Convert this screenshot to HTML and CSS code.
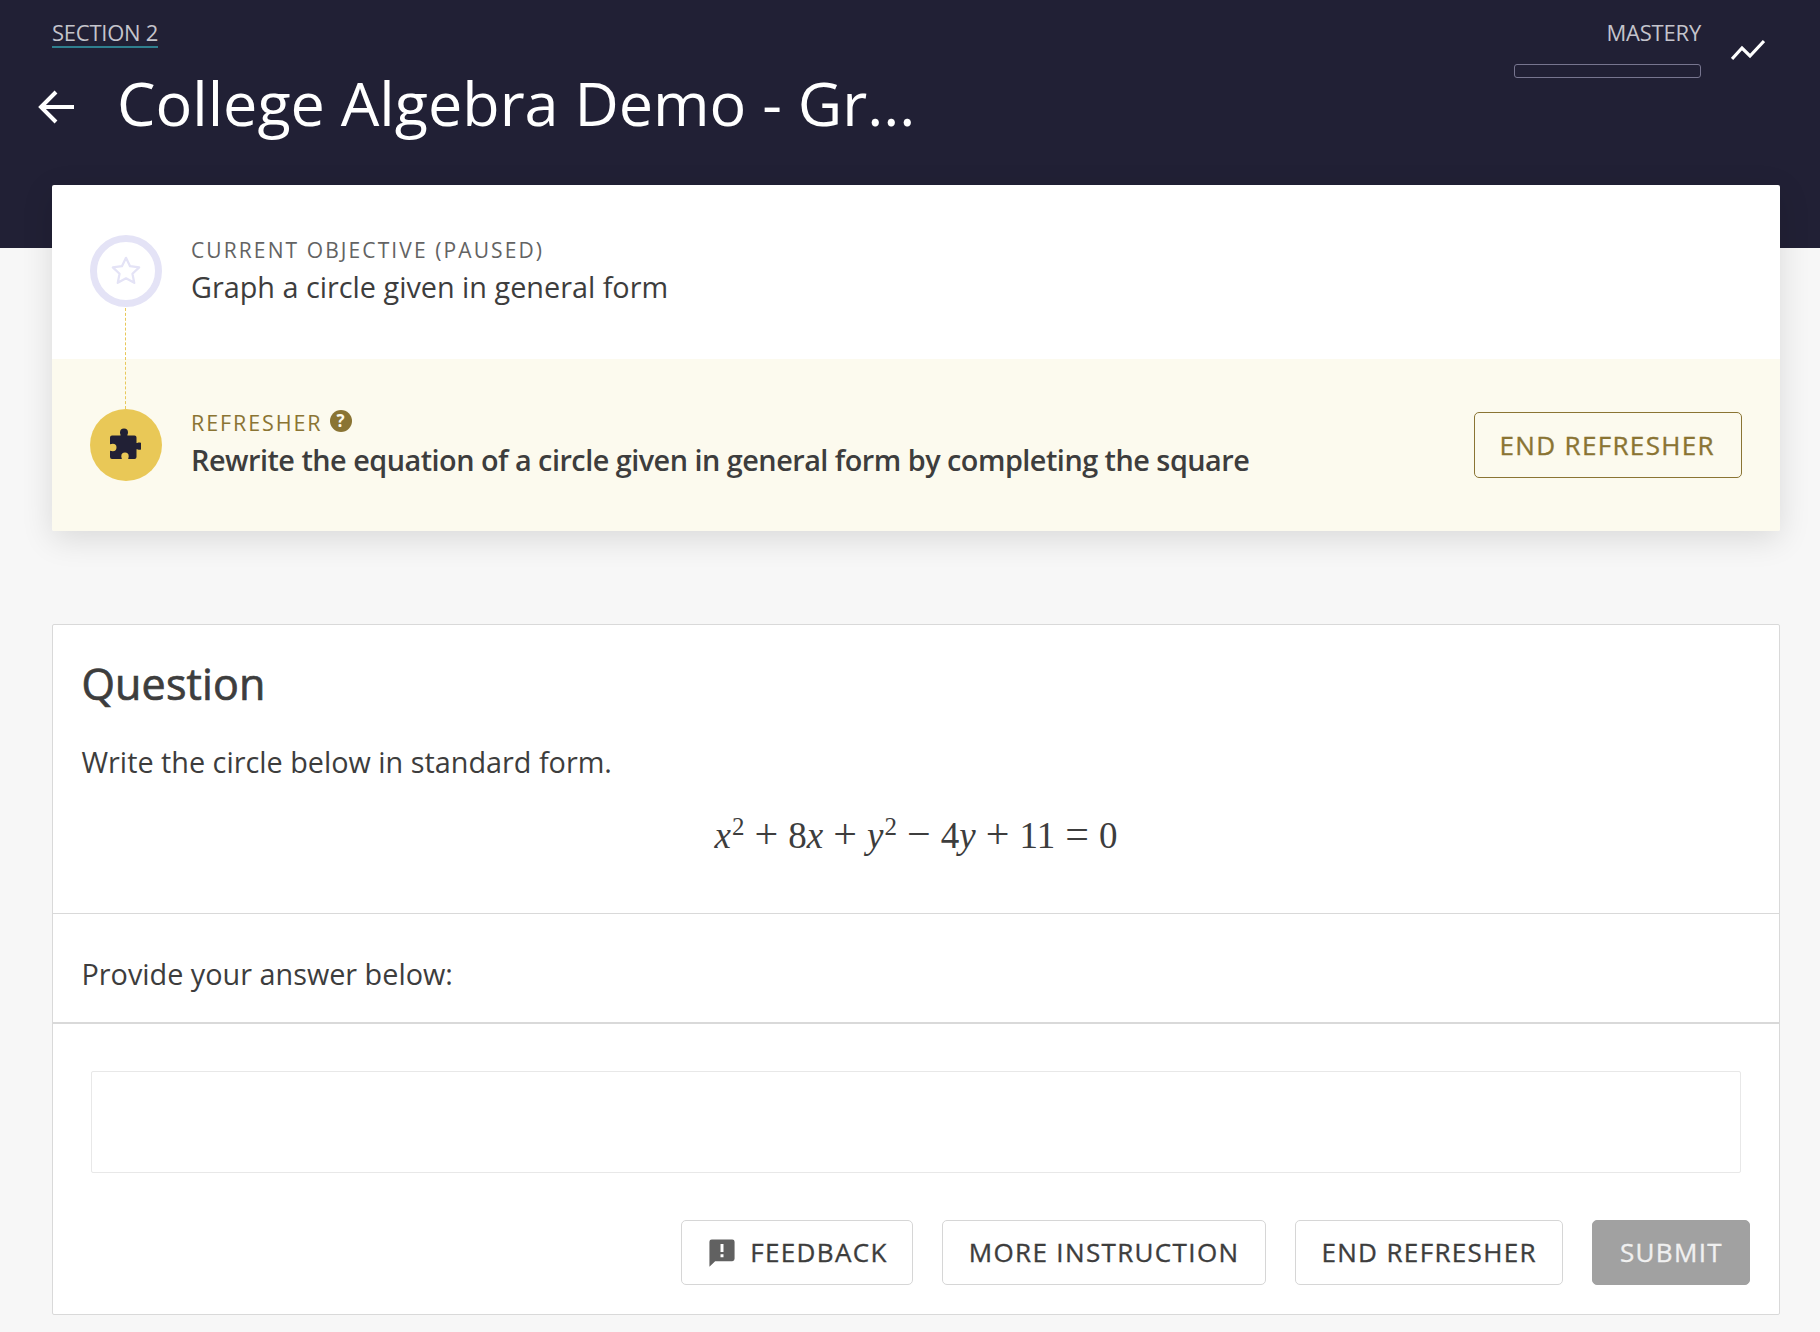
FILE: index.html
```html
<!DOCTYPE html>
<html lang="en">
<head>
<meta charset="utf-8">
<title>College Algebra Demo</title>
<link rel="stylesheet" href="styles.css">
</head>
<body>
<header class="hero">
  <div class="hero-top">
    <div class="hero-left">
      <a class="section-link">SECTION 2</a>
      <div class="title-row">
        <svg class="back" viewBox="0 0 38 34" width="38" height="34"><path d="M36 17H3M18 2L3 17l15 15" fill="none" stroke="#fff" stroke-width="4"/></svg>
        <h1 class="title">College Algebra Demo - Gr...</h1>
      </div>
    </div>
    <div class="mastery">
      <div class="mastery-col">
        <span class="mastery-label">MASTERY</span>
        <div class="mastery-bar"></div>
      </div>
      <svg class="trend" viewBox="0 0 34 22" width="34" height="22"><path d="M1 20L11 9l8 8L33 2" fill="none" stroke="#fff" stroke-width="3.200"/></svg>
    </div>
  </div>
</header>
<main class="content">
  <section class="objectives">
    <div class="connector"></div>
    <div class="obj-row">
      <div class="ring">
        <svg viewBox="0 0 24 24" width="36" height="36"><path d="M12 3.200l2.700 5.600 6.100.8-4.500 4.200 1.200 6.100-5.500-3-5.500 3 1.200-6.100-4.500-4.200 6.100-.8z" fill="none" stroke="#e4e3f6" stroke-width="1.500" stroke-linejoin="round"/></svg>
      </div>
      <div class="obj-text">
        <div class="eyebrow">CURRENT OBJECTIVE (PAUSED)</div>
        <div class="obj-name">Graph a circle given in general form</div>
      </div>
    </div>
    <div class="obj-row refresher">
      <div class="disc">
        <svg class="puzzle" viewBox="0 0 34 34" width="34" height="34"><path fill="#212035" d="M13 4.500a4 4 0 0 1 8 0c0 1.300-.6 2-.6 3h7.100a2 2 0 0 1 2 2v5.500c1 0 1.700-.6 2.800-.6a3.700 3.700 0 0 1 0 7.400c-1.100 0-1.800-.6-2.800-.6v7.800a2 2 0 0 1-2 2h-6.300c0-1 .5-1.700.5-2.800a3.700 3.700 0 0 0-7.400 0c0 1.100.5 1.800.5 2.800H5a2 2 0 0 1-2-2v-6.300c1 0 1.700.5 2.800.5a3.700 3.700 0 0 0 0-7.400c-1.100 0-1.800.5-2.800.5V9.500a2 2 0 0 1 2-2h8.600c0-1-.6-1.700-.6-3z"/></svg>
      </div>
      <div class="obj-text grow">
        <div class="eyebrow gold">REFRESHER <span class="help">?</span></div>
        <div class="obj-name strong">Rewrite the equation of a circle given in general form by completing the square</div>
      </div>
      <button class="btn btn-gold">END REFRESHER</button>
    </div>
  </section>

  <section class="question">
    <div class="q-body">
      <h2 class="q-title">Question</h2>
      <p class="q-text">Write the circle below in standard form.</p>
      <div class="math"><i>x</i><sup>2</sup> <span class="op">+</span> 8<i>x</i> <span class="op">+</span> <i>y</i><sup>2</sup> <span class="op">−</span> 4<i>y</i> <span class="op">+</span> 11 <span class="op">=</span> 0</div>
    </div>
    <div class="q-prompt">Provide your answer below:</div>
    <div class="q-answer">
      <div class="answer-box"></div>
      <div class="actions">
        <button class="btn btn-feedback">
          <svg class="fb-icon" viewBox="0 0 28 28" width="32" height="32"><path fill="#616161" d="M3 5a2 2 0 0 1 2-2h18a2 2 0 0 1 2 2v15a2 2 0 0 1-2 2H8l-5 5z"/><path fill="#fff" d="M12.700 7h2.600v7h-2.600zM12.700 16h2.600v2.600h-2.600z"/></svg>
          FEEDBACK
        </button>
        <button class="btn btn-more">MORE INSTRUCTION</button>
        <button class="btn">END REFRESHER</button>
        <button class="btn btn-disabled">SUBMIT</button>
      </div>
    </div>
  </section>
</main>
</body>
</html>
```
FILE: styles.css
```css
* { box-sizing: border-box; }
html, body { margin: 0; height: 100%; }
body {
  width: 1820px;
  height: 1332px;
  overflow: hidden;
  background: #f7f7f7;
  font-family: "Open Sans", sans-serif;
  color: #3d3d3d;
}
.hero {
  height: 248px;
  background: #212035;
  padding: 0 55px 0 38px;
}
.hero-top { display: flex; justify-content: space-between; align-items: flex-start; }
.hero-left { padding-top: 18px; }
.section-link {
  display: inline-block;
  margin-left: 14px;
  font-size: 22px;
  line-height: 28px;
  letter-spacing: -0.25px;
  color: #c4c4cc;
  border-bottom: 2px solid #2f7f8f;
}
.title-row { display: flex; align-items: center; gap: 41px; margin-top: 14px; }
.back { flex: none; margin-top: 8px; }
.title {
  margin: 0;
  font-size: 61.1px;
  line-height: 82px;
  font-weight: 400;
  color: #fff;
}
.mastery { display: flex; gap: 30px; padding-top: 17px; }
.mastery-col { display: flex; flex-direction: column; align-items: flex-end; gap: 17px; }
.mastery-label { font-size: 22px; line-height: 30px; letter-spacing: -0.2px; color: #c4c4cc; }
.mastery-bar { width: 187px; height: 14px; border: 1px solid #77758f; border-radius: 3px; }
.trend { margin-top: 22px; }
.content { padding: 0 40px 0 52px; margin-top: -63px; position: relative; }
.objectives {
  position: relative;
  background: #fff;
  border-radius: 2px;
  box-shadow: 0 8px 32px rgba(0,0,0,.12);
  overflow: hidden;
}
.connector {
  position: absolute;
  z-index: 1;
  left: 73px;
  top: 123px;
  height: 101px;
  border-left: 1px dashed #e8c85a;
}
.obj-row {
  position: relative;
  height: 174px;
  display: flex;
  align-items: center;
  padding: 0 38px;
  gap: 29px;
}
.obj-row.refresher { height: 172px; background: #fcfaee; }
.ring {
  flex: none;
  width: 72px;
  height: 72px;
  margin-top: -2px;
  border: 7px solid #e4e3f6;
  border-radius: 50%;
  background: #fff;
  display: flex;
  align-items: center;
  justify-content: center;
}
.disc {
  flex: none;
  width: 72px;
  height: 72px;
  border-radius: 50%;
  background: #e9c857;
  display: flex;
  align-items: center;
  justify-content: center;
}
.puzzle { margin-left: -4px; }
.obj-text { margin-top: -1px; }
.grow { flex: 1; margin-top: 1px; }
.eyebrow {
  font-size: 21px;
  line-height: 26px;
  letter-spacing: 2.1px;
  color: #636363;
}
.eyebrow.gold { color: #8a7433; letter-spacing: 1.9px; font-size: 21.5px; line-height: 28px; display: flex; align-items: center; gap: 7px; margin-top: -2px; }
.help {
  width: 22px;
  height: 22px;
  margin-top: -5px;
  border-radius: 50%;
  background: #8a7433;
  color: #fcfaee;
  font-size: 17px;
  line-height: 22px;
  font-weight: 700;
  letter-spacing: 0;
  text-align: center;
}
.obj-name { font-size: 28.8px; line-height: 40px; margin-top: 4px; color: #3d3d3d; }
.grow .obj-name { margin-top: 3px; }
.strong { font-weight: 600; letter-spacing: -0.5px; }
.btn {
  height: 65px;
  padding: 0 25px;
  display: inline-flex;
  align-items: center;
  gap: 12px;
  background: #fff;
  border: 1px solid #d6d6d6;
  border-radius: 5px;
  font-family: "Open Sans", sans-serif;
  font-size: 26px;
  font-weight: 400;
  letter-spacing: 1.35px;
  -webkit-text-stroke: 0.35px currentColor;
  color: #3d3d3d;
}
.actions .btn { padding-bottom: 2px; }
.btn-feedback { padding-left: 24px; padding-right: 24px; }
.btn-more { padding-left: 26px; padding-right: 26px; }
.btn-gold { height: 66px; padding: 0 26px 0 24px; background: transparent; border-color: #8a7433; color: #8a7433; }
.btn-disabled { padding-left: 27px; padding-right: 26px; background: #a1a1a1; border-color: #a1a1a1; color: #f0f0f0; }
.question {
  margin-top: 93px;
  height: 691px;
  background: #fff;
  border: 1px solid #d9d9d9;
  border-radius: 2px;
  display: flex;
  flex-direction: column;
}
.q-body { height: 289px; padding: 31px 28.5px 0; border-bottom: 1px solid #d9d9d9; }
.q-title { margin: 0; font-size: 43px; line-height: 56px; font-weight: 400; letter-spacing: 0.15px; -webkit-text-stroke: 0.7px currentColor; color: #3d3d3d; }
.q-text { margin: 30px 0 0; font-size: 28.8px; line-height: 40px; }
.math {
  margin-top: 31px;
  text-align: center;
  font-family: "Liberation Serif", serif;
  font-size: 37px;
  line-height: 46px;
  word-spacing: 0.8px;
}
.op { font-size: 42px; line-height: 0; }
.math sup { font-size: 25px; line-height: 0; margin-left: 1px; }
.q-prompt { height: 110px; display: flex; align-items: center; padding: 10px 28.5px 0; font-size: 28.8px; border-bottom: 2px solid #d9d9d9; }
.q-answer { flex: 1; padding: 47px 29px 0; }
.answer-box { height: 102px; margin: 0 9px; border: 1px solid #e8e8e8; border-radius: 2px; }
.actions { display: flex; justify-content: flex-end; gap: 29px; margin-top: 47px; }
```
